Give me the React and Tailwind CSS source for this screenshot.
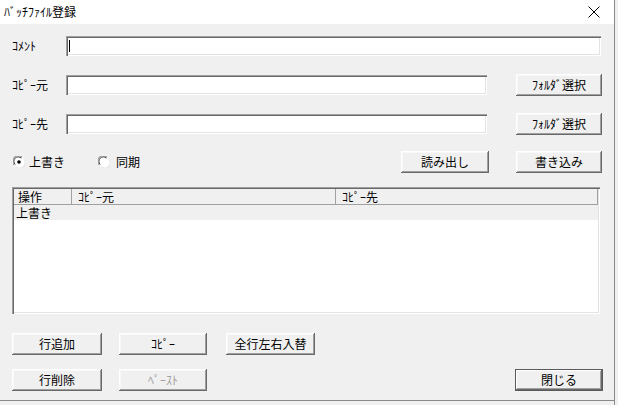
import React from "react";

const font = { fontFamily: '"Noto Sans CJK JP", "MS UI Gothic", sans-serif' };

function Btn({ w, children, disabled, def }) {
  const base =
    "flex items-center justify-center h-[22px] bg-[#f0f0f0] text-[12px] leading-none";
  const shadow = def
    ? "shadow-[inset_0_0_0_1px_#5a5a5a,inset_-2px_-2px_#696969,inset_2px_2px_#ffffff,inset_-3px_-3px_#a0a0a0]"
    : "shadow-[inset_-1px_-1px_#696969,inset_1px_1px_#ffffff,inset_-2px_-2px_#a0a0a0,inset_2px_2px_#f8f8f8]";
  return (
    <div className={`${base} ${shadow} ${disabled ? "text-[#a0a0a0]" : "text-black"}`} style={{ width: w }}>
      {children}
    </div>
  );
}

const sunken =
  "bg-white shadow-[inset_1px_1px_#a0a0a0,inset_2px_2px_#696969,inset_-1px_-1px_#ffffff,inset_-2px_-2px_#e3e3e3]";

function Radio({ checked }) {
  return (
    <svg width="12" height="12" viewBox="0 0 12 12">
      <circle cx="6" cy="6" r="5.5" fill="#ffffff" />
      <path d="M1.2 9 A5.3 5.3 0 0 1 9 1.2" fill="none" stroke="#808080" strokeWidth="1" />
      <path d="M2.2 8.5 A4.3 4.3 0 0 1 8.5 2.2" fill="none" stroke="#404040" strokeWidth="1" />
      <path d="M3 10.8 A5.3 5.3 0 0 0 10.8 3" fill="none" stroke="#e3e3e3" strokeWidth="1" />
      {checked && <circle cx="6" cy="6" r="1.8" fill="#000" />}
    </svg>
  );
}

export default function App() {
  return (
    <div className="w-[618px] h-[405px] bg-[#f0f0f0] overflow-hidden relative" style={font}>
      <div className="flex">
        <div className="w-[614px] h-[401px] flex flex-col border-b border-[#8a8a8a]">
          {/* title bar */}
          <div className="h-[24px] bg-white flex items-center justify-between pl-[4px] pr-[14px] shrink-0">
            <span className="text-[12px] text-black leading-none">ﾊﾞｯﾁﾌｧｲﾙ登録</span>
            <svg width="12" height="12" viewBox="0 0 12 12">
              <path d="M0.5 0.5 L11.5 11.5 M11.5 0.5 L0.5 11.5" stroke="#000" strokeWidth="1" />
            </svg>
          </div>
          {/* body */}
          <div className="flex-1 bg-[#f0f0f0] pl-[12px] text-[12px] text-black">
            {/* comment */}
            <div className="flex items-center mt-[12px] h-[20px]">
              <span className="w-[54px]">ｺﾒﾝﾄ</span>
              <div className={`w-[535px] h-[20px] ${sunken} flex items-center pl-[3px]`}>
                <div className="w-[1px] h-[12px] bg-black" />
              </div>
            </div>
            {/* copy src */}
            <div className="flex items-center mt-[18px] h-[22px]">
              <span className="w-[54px]">ｺﾋﾟｰ元</span>
              <div className={`w-[421px] h-[20px] ${sunken}`} />
              <div className="ml-[29px]">
                <Btn w={86}>ﾌｫﾙﾀﾞ選択</Btn>
              </div>
            </div>
            {/* copy dst */}
            <div className="flex items-center mt-[17px] h-[22px]">
              <span className="w-[54px]">ｺﾋﾟｰ先</span>
              <div className={`w-[421px] h-[20px] ${sunken}`} />
              <div className="ml-[29px]">
                <Btn w={86}>ﾌｫﾙﾀﾞ選択</Btn>
              </div>
            </div>
            {/* radios */}
            <div className="flex items-center mt-[16px] h-[22px]">
              <div className="flex items-center pl-[1px] w-[86px]">
                <Radio checked />
                <span className="ml-[4px]">上書き</span>
              </div>
              <div className="flex items-center">
                <Radio />
                <span className="ml-[6px]">同期</span>
              </div>
              <div className="ml-[261px]">
                <Btn w={88}>読み出し</Btn>
              </div>
              <div className="ml-[27px]">
                <Btn w={86}>書き込み</Btn>
              </div>
            </div>
            {/* list */}
            <div className={`mt-[14px] w-[588px] h-[127px] ${sunken} p-[2px] pr-[2px]`}>
              <div className="flex h-[16px] bg-[#f0f0f0] border-b border-[#a0a0a0] w-[584px] border-r">
                <div className="w-[58px] pl-[4px] border-r border-[#a0a0a0] leading-[15px]">操作</div>
                <div className="w-[264px] pl-[6px] border-r border-[#a0a0a0] leading-[15px]">ｺﾋﾟｰ元</div>
                <div className="flex-1 pl-[6px] leading-[15px]">ｺﾋﾟｰ先</div>
              </div>
              <div className="h-[15px] bg-[#f0f0f0] pl-[2px] leading-[15px]">上書き</div>
            </div>
            {/* buttons row 1 */}
            <div className="flex items-center mt-[19px]">
              <Btn w={90}>行追加</Btn>
              <div className="ml-[17px]">
                <Btn w={88}>ｺﾋﾟｰ</Btn>
              </div>
              <div className="ml-[19px]">
                <Btn w={89}>全行左右入替</Btn>
              </div>
            </div>
            {/* buttons row 2 */}
            <div className="flex items-center mt-[14px]">
              <Btn w={90}>行削除</Btn>
              <div className="ml-[17px]">
                <Btn w={88} disabled>ﾍﾟｰｽﾄ</Btn>
              </div>
              <div className="ml-[308px]">
                <Btn w={88} def>閉じる</Btn>
              </div>
            </div>
          </div>
        </div>
        <div className="w-[1px] h-[405px] bg-[#8a8a8a]" />
        <div className="flex-1 h-[405px] bg-[#f0f0f0]" />
      </div>
      {/* background grid below the dialog */}
      <div className="flex h-[4px] bg-[#f4f4f4]">
        <div className="w-[51px] border-r border-[#606060]" />
        <div className="w-[146px] border-r border-[#c0c0c0]" />
        <div className="w-[113px] border-r border-[#c0c0c0]" />
        <div className="flex-1" />
      </div>
    </div>
  );
}
